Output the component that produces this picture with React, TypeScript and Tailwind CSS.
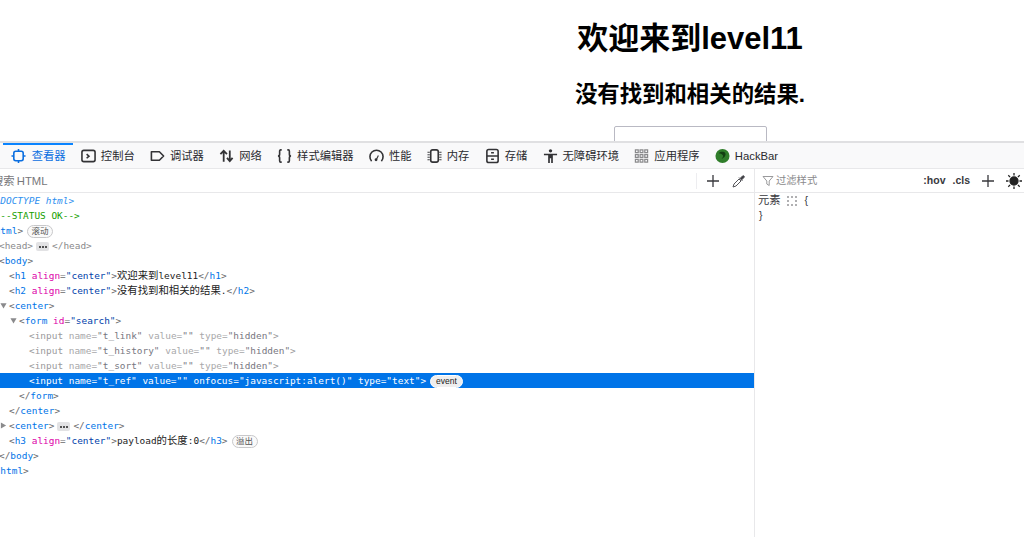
import React from 'react';

const cjk = "font-['Liberation_Sans','Noto_Sans_CJK_SC',sans-serif]";
const mono = "font-['DejaVu_Sans_Mono','Noto_Sans_CJK_SC',monospace]";

const Ic: React.FC<{ children: React.ReactNode; color?: string }> = ({ children, color = '#333336' }) => (
  <svg width="15" height="16" viewBox="0 0 16 16" fill="none" stroke={color} strokeWidth="1.700" className="shrink-0">
    {children}
  </svg>
);

const tabs: { label: string; icon: React.ReactNode; active?: boolean }[] = [
  {
    label: '查看器',
    active: true,
    icon: (
      <Ic color="#0a6ee0">
        <rect x="3" y="3" width="10" height="10" rx="2" />
        <path d="M8 0.500V3M8 13v2.500M0.500 8H3M13 8h2.500" />
      </Ic>
    ),
  },
  {
    label: '控制台',
    icon: (
      <Ic>
        <rect x="1" y="2" width="14" height="12" rx="2" />
        <path d="M6 6l2.500 2.200L6 10.400" />
      </Ic>
    ),
  },
  {
    label: '调试器',
    icon: (
      <Ic>
        <path d="M1.500 3.500h8.500l4.500 4.500-4.500 4.500H1.500z" strokeLinejoin="round" />
      </Ic>
    ),
  },
  {
    label: '网络',
    icon: (
      <Ic>
        <path d="M5 14V2.500M1.500 6L5 2.500 8.500 6M11.500 2v11.500M8.500 10l3 3.500 3-3.500" strokeWidth="1.900" />
      </Ic>
    ),
  },
  {
    label: '样式编辑器',
    icon: (
      <Ic>
        <path d="M5 1.500H4C3 1.500 2.800 2.200 2.800 3v3C2.800 7.200 2 8 1 8c1 0 1.800.8 1.800 2v3c0 .8.2 1.500 1.200 1.500h1M11 1.500h1c1 0 1.200.7 1.200 1.500v3c0 1.200.8 2 1.800 2-1 0-1.800.8-1.800 2v3c0 .8-.2 1.500-1.200 1.500h-1" />
      </Ic>
    ),
  },
  {
    label: '性能',
    icon: (
      <Ic>
        <path d="M2.800 13.500A7 7 0 1 1 13.200 13.500" />
        <circle cx="7.500" cy="12" r="1.500" fill="#333336" stroke="none" />
        <path d="M8 11.500l2-4" strokeWidth="1.200" />
      </Ic>
    ),
  },
  {
    label: '内存',
    icon: (
      <Ic>
        <rect x="4" y="1.500" width="8" height="13" rx="2" />
        <path d="M0.500 4H3M0.500 6.700H3M0.500 9.300H3M0.500 12H3M13 4h2.500M13 6.700h2.500M13 9.300h2.500M13 12h2.500" strokeWidth="1" />
      </Ic>
    ),
  },
  {
    label: '存储',
    icon: (
      <Ic>
        <rect x="2" y="1" width="12" height="14" rx="2" />
        <path d="M2 8h12M6.500 4.500h3M6.500 11.500h3" />
      </Ic>
    ),
  },
  {
    label: '无障碍环境',
    icon: (
      <Ic>
        <circle cx="8" cy="2.500" r="1.800" fill="#333336" stroke="none" />
        <path d="M1 5.500h14v1.600h-4.500V15.500H8.700v-5H7.300v5H5.500V7.100H1z" fill="#333336" stroke="none" />
      </Ic>
    ),
  },
  {
    label: '应用程序',
    icon: (
      <Ic color="#8a8a8c">
        <path d="M1.500 1.500h3v3h-3zM6.500 1.500h3v3h-3zM11.500 1.500h3v3h-3zM1.500 6.500h3v3h-3zM6.500 6.500h3v3h-3zM11.500 6.500h3v3h-3zM1.500 11.500h3v3h-3zM6.500 11.500h3v3h-3zM11.500 11.500h3v3h-3z" strokeWidth="1.300" />
      </Ic>
    ),
  },
  {
    label: 'HackBar',
    icon: (
      <svg width="15" height="16" viewBox="0 0 16 16" className="shrink-0">
        <circle cx="8" cy="8" r="7.500" fill="#2f7d2a" />
        <path d="M4 5c2-2 6-2 7 0 1 2-1 5-4 6 1-1 2-2 1.500-3.500C8 6 6 5.500 4 5z" fill="#123f12" />
      </svg>
    ),
  },
];

const B: React.FC<{ children: React.ReactNode }> = ({ children }) => <span className="text-[#6a6a6c]">{children}</span>;
const T: React.FC<{ children: React.ReactNode }> = ({ children }) => <span className="text-[#0074e8]">{children}</span>;
const A: React.FC<{ children: React.ReactNode }> = ({ children }) => <span className="text-[#dd00a9]">{children}</span>;
const V: React.FC<{ children: React.ReactNode }> = ({ children }) => <span className="text-[#003eaa]">{children}</span>;
const Zh: React.FC<{ children: React.ReactNode }> = ({ children }) => <span className="text-[10.400px] text-[#222222]">{children}</span>;

const Pill: React.FC<{ children: React.ReactNode; dark?: boolean }> = ({ children, dark }) => (
  <span
    className={`ml-[4px] inline-flex h-[13px] items-center rounded-full border align-middle text-[8.500px] leading-none ${cjk} ${
      dark ? 'border-white bg-[#eeeeee] px-[5px] text-[#222222]' : 'border-[#c8c8ca] bg-[#fafafa] px-[3.500px] text-[#555555]'
    }`}
  >
    {children}
  </span>
);

const Dots: React.FC = () => (
  <span className="mx-[3px] inline-flex h-[9px] w-[13px] items-center justify-center gap-[1px] rounded-[2px] bg-[#e2e2e4] align-middle">
    <span className="h-[2px] w-[2px] rounded-full bg-[#222222]" />
    <span className="h-[2px] w-[2px] rounded-full bg-[#222222]" />
    <span className="h-[2px] w-[2px] rounded-full bg-[#222222]" />
  </span>
);

const Arrow: React.FC<{ className: string; right?: boolean }> = ({ className, right }) => (
  <svg width="7" height="7" viewBox="0 0 8 8" className={`absolute top-[4px] ${className}`}>
    <path d={right ? 'M1 0.500L7 4 1 7.500z' : 'M0.500 1.500h7L4 7.500z'} fill="#8a8a8c" />
  </svg>
);

const Row: React.FC<{ children: React.ReactNode; indent: string; selected?: boolean }> = ({ children, indent, selected }) => (
  <div className={`relative h-[15px] whitespace-pre leading-[15px] ${selected ? 'bg-[#0074e8] text-white' : ''}`}>
    <div className={indent}>{children}</div>
  </div>
);

const HiddenInput: React.FC<{ name: string }> = ({ name }) => (
  <Row indent="ml-[29px]">
    <span className="text-[#9a9a9c]">{'<'}input </span>
    <span className="text-[#a8a8aa]">name=</span>
    <span className="text-[#77777f]">"{name}"</span>
    <span className="text-[#a8a8aa]"> value=</span>
    <span className="text-[#77777f]">""</span>
    <span className="text-[#a8a8aa]"> type=</span>
    <span className="text-[#77777f]">"hidden"</span>
    <span className="text-[#9a9a9c]">{'>'}</span>
  </Row>
);

const App: React.FC = () => {
  return (
    <div className={`flex h-[537px] w-[1024px] flex-col overflow-hidden bg-white ${cjk}`}>
      {/* page under the devtools, scrolled sideways */}
      <div className="h-[141px] shrink-0 overflow-hidden">
        <div className="flex w-[1380px] flex-col items-center text-black">
          <h1 className="mt-[20px] text-[31px] font-bold leading-[37px]">欢迎来到level11</h1>
          <h2 className="mt-[22px] text-[22.400px] font-bold leading-[32px]">没有找到和相关的结果.</h2>
          <div className="mt-[15px] h-[30px] w-[153px] shrink-0 rounded-[2px] border border-[#b9b9c3] bg-white" />
        </div>
      </div>

      {/* tabs */}
      <div className="flex h-[28px] shrink-0 border-t-2 border-b border-t-[#e0e0e2] border-b-[#e8e8ea] bg-[#f9f9fa] pl-[3px]">
        {tabs.map((t) => (
          <div
            key={t.label}
            className={`flex items-center px-[7.650px] pt-[1px] text-[11.300px] ${
              t.active ? 'relative gap-[6px] text-[#0a6ee0]' : 'gap-[5px] text-[#2a2a2e]'
            }`}
          >
            {t.active && <div className="absolute left-0 right-0 top-0 h-[1.500px] bg-[#0a84ff]" />}
            {t.icon}
            <span>{t.label}</span>
          </div>
        ))}
      </div>

      <div className="flex min-h-0 flex-1">
        {/* markup pane */}
        <div className="flex w-[754px] shrink-0 flex-col overflow-hidden">
          <div className="flex h-[24px] shrink-0 items-center border-b border-[#e8e8ea]">
            <span className="ml-[-8px] pt-[1px] text-[11.300px] text-[#77777a] [word-spacing:-1px]">搜索 HTML</span>
            <div className="ml-auto flex items-center">
              <div className="h-[16px] w-px bg-[#ededf0]" />
              <svg width="14" height="14" viewBox="0 0 14 14" className="ml-[9px]" stroke="#38383d" strokeWidth="1.300">
                <path d="M7 1v12M1 7h12" />
              </svg>
              <svg width="14" height="14" viewBox="0 0 14 14" className="ml-[12px] mr-[8px]" fill="none" stroke="#55555a" strokeWidth="1">
                <path d="M1 13l1-3 5-5 2 2-5 5z" />
                <path d="M7 3.500l3.500 3.500M8 4.500l2.500-2.500c1-1 2.500.5 1.500 1.500L9.500 6" fill="#38383d" />
              </svg>
            </div>
          </div>
          <div className={`min-h-0 flex-1 text-[9.440px] ${mono}`}>
            <Row indent="ml-[-11px]">
              <span className="italic text-[#2e8fef]">{'<!DOCTYPE html>'}</span>
            </Row>
            <Row indent="ml-[-11px]">
              <span className="text-[#16a000]">{'<!--STATUS OK-->'}</span>
            </Row>
            <Row indent="ml-[-11px]">
              <B>{'<'}</B><T>html</T><B>{'>'}</B>
              <Pill>滚动</Pill>
            </Row>
            <Row indent="ml-[-1px]">
              <span className="text-[#8a8a8c]">{'<head>'}</span>
              <Dots />
              <span className="text-[#8a8a8c]">{'</head>'}</span>
            </Row>
            <Row indent="ml-[-1px]">
              <B>{'<'}</B><T>body</T><B>{'>'}</B>
            </Row>
            <Row indent="ml-[9px]">
              <B>{'<'}</B><T>h1</T> <A>align</A><B>=</B><V>"center"</V><B>{'>'}</B>
              <Zh>欢迎来到</Zh><span className="text-[#222222]">level11</span>
              <B>{'</'}</B><T>h1</T><B>{'>'}</B>
            </Row>
            <Row indent="ml-[9px]">
              <B>{'<'}</B><T>h2</T> <A>align</A><B>=</B><V>"center"</V><B>{'>'}</B>
              <Zh>没有找到和相关的结果</Zh><span className="text-[#222222]">.</span>
              <B>{'</'}</B><T>h2</T><B>{'>'}</B>
            </Row>
            <Row indent="ml-[9px]">
              <Arrow className="left-0" />
              <B>{'<'}</B><T>center</T><B>{'>'}</B>
            </Row>
            <Row indent="ml-[19px]">
              <Arrow className="left-[10px]" />
              <B>{'<'}</B><T>form</T> <A>id</A><B>=</B><V>"search"</V><B>{'>'}</B>
            </Row>
            <HiddenInput name="t_link" />
            <HiddenInput name="t_history" />
            <HiddenInput name="t_sort" />
            <Row indent="ml-[29px]" selected>
              <span>{'<input name="t_ref" value="" onfocus="javascript:alert()" type="text">'}</span>
              <Pill dark>event</Pill>
            </Row>
            <Row indent="ml-[19px]">
              <B>{'</'}</B><T>form</T><B>{'>'}</B>
            </Row>
            <Row indent="ml-[9px]">
              <B>{'</'}</B><T>center</T><B>{'>'}</B>
            </Row>
            <Row indent="ml-[9px]">
              <Arrow className="left-0" right />
              <B>{'<'}</B><T>center</T><B>{'>'}</B>
              <Dots />
              <B>{'</'}</B><T>center</T><B>{'>'}</B>
            </Row>
            <Row indent="ml-[9px]">
              <B>{'<'}</B><T>h3</T> <A>align</A><B>=</B><V>"center"</V><B>{'>'}</B>
              <span className="text-[#222222]">payload</span><Zh>的长度</Zh><span className="text-[#222222]">:0</span>
              <B>{'</'}</B><T>h3</T><B>{'>'}</B>
              <Pill>溢出</Pill>
            </Row>
            <Row indent="ml-[-1px]">
              <B>{'</'}</B><T>body</T><B>{'>'}</B>
            </Row>
            <Row indent="ml-[-11px]">
              <B>{'</'}</B><T>html</T><B>{'>'}</B>
            </Row>
          </div>
        </div>

        {/* rules pane */}
        <div className="flex min-w-0 flex-1 flex-col border-l border-[#e8e8ea]">
          <div className="flex h-[24px] shrink-0 items-center border-b border-[#e8e8ea] pl-[7px] pr-[2px]">
            <svg width="12" height="12" viewBox="0 0 12 12" fill="none" stroke="#9a9a9c" strokeWidth="1">
              <path d="M1 1.500h10L7.200 6v4.500L4.800 9V6z" />
            </svg>
            <span className="ml-[2px] pt-[1px] text-[10.300px] text-[#8a8a8c]">过滤样式</span>
            <span className="ml-auto pt-[1px] text-[10.500px] font-bold text-[#38383d]">:hov</span>
            <span className="ml-[7px] pt-[1px] text-[10.500px] font-bold text-[#38383d]">.cls</span>
            <svg width="14" height="14" viewBox="0 0 14 14" className="ml-[11px]" stroke="#38383d" strokeWidth="1.300">
              <path d="M7 1v12M1 7h12" />
            </svg>
            <svg width="16" height="16" viewBox="0 0 16 16" className="ml-[11px]" stroke="#222222" strokeWidth="1.300">
              <circle cx="8" cy="8" r="4" fill="#222222" />
              <path d="M8 0v2.500M8 13.500V16M0 8h2.500M13.500 8H16M2.300 2.300l1.800 1.800M11.900 11.900l1.800 1.800M2.300 13.700l1.800-1.800M11.900 4.100l1.800-1.800" />
            </svg>
          </div>
          <div className={`pl-[3px] text-[10.500px] text-[#38383d] ${cjk}`}>
            <div className="flex h-[15px] items-center">
              <span className="text-[11.300px]">元素</span>
              <svg width="10" height="10" viewBox="0 0 10 10" className="ml-[6px]" fill="#b0b0b2">
                <path d="M0 0h2v2H0zM4 0h2v2H4zM8 0h2v2H8zM0 4h2v2H0zM8 4h2v2H8zM0 8h2v2H0zM4 8h2v2H4zM8 8h2v2H8z" />
              </svg>
              <span className="ml-[8px]">{'{'}</span>
            </div>
            <div className="flex h-[15px] items-center pl-[1px]">{'}'}</div>
          </div>
        </div>
      </div>
    </div>
  );
};

export default App;
